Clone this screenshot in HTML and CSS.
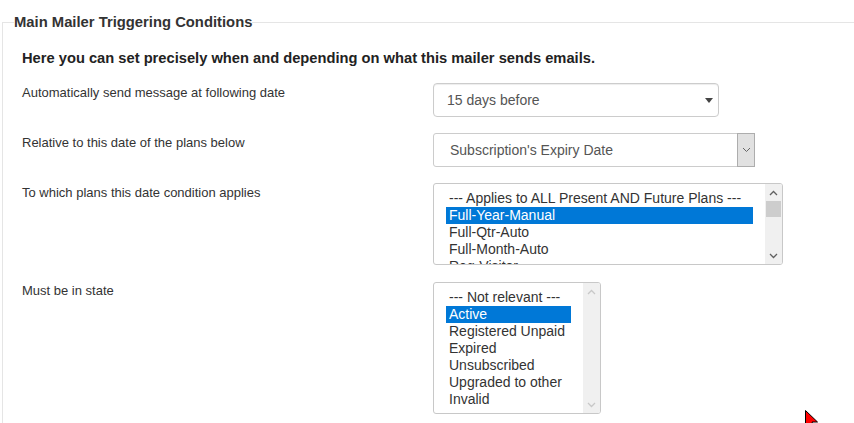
FILE: index.html
```html
<!DOCTYPE html>
<html>
<head>
<meta charset="utf-8">
<link rel="stylesheet" href="styles.css">
</head>
<body>
<div class="panel">
  <div class="legend">Main Mailer Triggering Conditions</div>
  <div class="intro">Here you can set precisely when and depending on what this mailer sends emails.</div>

  <div class="row">
    <div class="label">Automatically send message at following date</div>
    <div class="select">
      <span>15 days before</span>
      <span class="caret"></span>
    </div>
  </div>

  <div class="row">
    <div class="label">Relative to this date of the plans below</div>
    <div class="select native">
      <span class="native-text">Subscription's Expiry Date</span>
      <span class="native-btn">
        <svg width="9" height="6" viewBox="0 0 9 6"><polyline points="1,1 4.5,4.5 8,1" fill="none" stroke="#666" stroke-width="1"/></svg>
      </span>
    </div>
  </div>

  <div class="row">
    <div class="label">To which plans this date condition applies</div>
    <div class="listbox plans">
      <div class="list">
        <div class="opt">--- Applies to ALL Present AND Future Plans ---</div>
        <div class="opt sel">Full-Year-Manual</div>
        <div class="opt">Full-Qtr-Auto</div>
        <div class="opt">Full-Month-Auto</div>
        <div class="opt">Reg-Visitor</div>
      </div>
      <div class="sbar">
        <div class="sbtn"><svg width="9" height="6" viewBox="0 0 9 6"><polyline points="1,5 4.5,1.5 8,5" fill="none" stroke="#606060" stroke-width="1.3"/></svg></div>
        <div class="thumb"></div>
        <div class="track"></div>
        <div class="sbtn"><svg width="9" height="6" viewBox="0 0 9 6"><polyline points="1,1 4.5,4.5 8,1" fill="none" stroke="#606060" stroke-width="1.3"/></svg></div>
      </div>
    </div>
  </div>

  <div class="row">
    <div class="label">Must be in state</div>
    <div class="listbox states">
      <div class="list">
        <div class="opt">--- Not relevant ---</div>
        <div class="opt sel">Active</div>
        <div class="opt">Registered Unpaid</div>
        <div class="opt">Expired</div>
        <div class="opt">Unsubscribed</div>
        <div class="opt">Upgraded to other</div>
        <div class="opt">Invalid</div>
      </div>
      <div class="sbar">
        <div class="sbtn"><svg width="9" height="6" viewBox="0 0 9 6"><polyline points="1,5 4.5,1.5 8,5" fill="none" stroke="#c8c8c8" stroke-width="1.3"/></svg></div>
        <div class="track"></div>
        <div class="sbtn"><svg width="9" height="6" viewBox="0 0 9 6"><polyline points="1,1 4.5,4.5 8,1" fill="none" stroke="#c8c8c8" stroke-width="1.3"/></svg></div>
      </div>
    </div>
  </div>
</div>

<svg class="cursor" width="14" height="22" viewBox="0 0 14 22">
  <polygon points="0.5,0.5 0.5,17 4.5,13 7.5,20 10,19 7,12 12.5,12" fill="#ff0000" stroke="#000" stroke-width="1"/>
</svg>
</body>
</html>
```

FILE: styles.css
```css
html, body {
  margin: 0;
  padding: 0;
  height: 100%;
  overflow: hidden;
  background: #fff;
}

body {
  font-family: "Liberation Sans", Arial, sans-serif;
  color: #333;
  position: relative;
}

.panel {
  margin: 22px 0 0 2px;
  border-top: 1px solid #e5e5e5;
  border-left: 1px solid #e5e5e5;
  padding: 0 0 9px 19px;
}

.legend {
  width: max-content;
  margin: -9px 0 0 -8px;
  background: #fff;
  font-weight: bold;
  font-size: 14.8px;
  line-height: 17px;
  color: #333;
}

.intro {
  margin-top: 18px;
  font-weight: bold;
  font-size: 14.7px;
  line-height: 18px;
  color: #222;
}

.row {
  display: flex;
  align-items: flex-start;
  margin-top: 16px;
}

.label {
  width: 411px;
  flex: none;
  padding-top: 2px;
  font-size: 13px;
  line-height: 16px;
  color: #333;
}

.select {
  box-sizing: border-box;
  width: 286px;
  height: 34px;
  border: 1px solid #ccc;
  border-radius: 4px;
  box-shadow: inset 0 1px 1px rgba(0,0,0,0.075);
  display: flex;
  align-items: center;
  justify-content: space-between;
  padding: 0 5px 0 13px;
  font-size: 14px;
  color: #555;
}

.caret {
  width: 0;
  height: 0;
  border-top: 5px solid #444;
  border-left: 4px solid transparent;
  border-right: 4px solid transparent;
  margin-top: 1px;
}

.select.native {
  width: 322px;
  padding: 0;
  border-radius: 3px;
  box-shadow: none;
  align-items: stretch;
}

.native-text {
  flex: 1;
  display: flex;
  align-items: center;
  padding-left: 16px;
}

.native-btn {
  width: 16px;
  background: #e1e1e1;
  border: 1px solid #adadad;
  margin: -1px -1px -1px 0;
  display: flex;
  align-items: center;
  justify-content: center;
}

.listbox {
  box-sizing: border-box;
  border: 1px solid #c8c8c8;
  border-radius: 3px;
  display: flex;
  overflow: hidden;
  background: #fff;
}

.listbox.plans {
  width: 350px;
  height: 82px;
}

.listbox.states {
  width: 168px;
  height: 132px;
  margin-top: 1px;
}

.list {
  flex: 1;
  min-width: 0;
  padding: 6px 12px;
  overflow: hidden;
}

.opt {
  font-size: 14px;
  line-height: 17px;
  padding: 0 3px;
  color: #333;
  white-space: nowrap;
}

.opt.sel {
  background: #0078d7;
  color: #fff;
}

.sbar {
  width: 17px;
  flex: none;
  background: #f0f0f0;
  display: flex;
  flex-direction: column;
}

.sbtn {
  height: 17px;
  flex: none;
  display: flex;
  align-items: center;
  justify-content: center;
}

.thumb {
  height: 16px;
  flex: none;
  margin: 0 1px;
  background: #cdcdcd;
}

.track {
  flex: 1;
}

.cursor {
  position: absolute;
  left: 805px;
  top: 410px;
}
```
